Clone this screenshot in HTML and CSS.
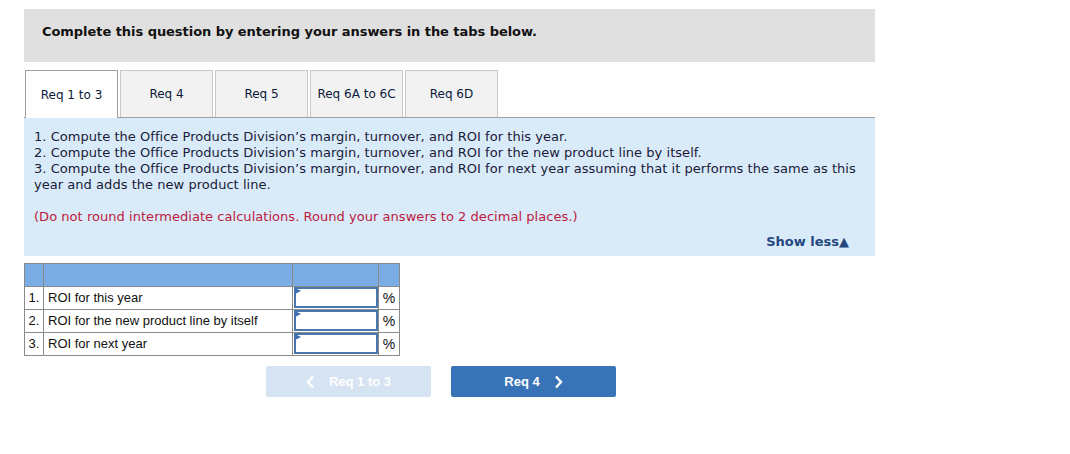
FILE: index.html
```html
<!DOCTYPE html>
<html>
<head>
<meta charset="utf-8">
<link rel="stylesheet" href="styles.css">
</head>
<body>
<div class="page">
  <div class="banner">Complete this question by entering your answers in the tabs below.</div>
  <div class="tabs">
    <div class="tab active">Req 1 to 3</div>
    <div class="tab">Req 4</div>
    <div class="tab">Req 5</div>
    <div class="tab">Req 6A to 6C</div>
    <div class="tab">Req 6D</div>
  </div>
  <div class="panel">
    <div class="lines">
      <div>1. Compute the Office Products Division’s margin, turnover, and ROI for this year.</div>
      <div>2. Compute the Office Products Division’s margin, turnover, and ROI for the new product line by itself.</div>
      <div>3. Compute the Office Products Division’s margin, turnover, and ROI for next year assuming that it performs the same as this year and adds the new product line.</div>
    </div>
    <div class="note">(Do not round intermediate calculations. Round your answers to 2 decimal places.)</div>
    <div class="showless">Show less<span class="tri">▲</span></div>
  </div>
  <table class="grid">
    <colgroup><col class="w-num"><col class="w-label"><col class="w-in"><col class="w-pct"></colgroup>
    <tr class="head"><td></td><td></td><td></td><td></td></tr>
    <tr><td class="c-num">1.</td><td class="c-label">ROI for this year</td><td class="c-in"><div class="inp"><span class="flag"></span></div></td><td class="c-pct">%</td></tr>
    <tr><td class="c-num">2.</td><td class="c-label">ROI for the new product line by itself</td><td class="c-in"><div class="inp"><span class="flag"></span></div></td><td class="c-pct">%</td></tr>
    <tr><td class="c-num">3.</td><td class="c-label">ROI for next year</td><td class="c-in"><div class="inp"><span class="flag"></span></div></td><td class="c-pct">%</td></tr>
  </table>
  <div class="nav">
    <div class="btn prev"><svg class="chev" width="9" height="14" viewBox="0 0 9 14"><path d="M7 1.5 L2 7 L7 12.5" fill="none" stroke="#fff" stroke-width="2.4"/></svg><span>Req 1 to 3</span></div>
    <div class="btn next"><span>Req 4</span><svg class="chev" width="9" height="14" viewBox="0 0 9 14"><path d="M2 1.5 L7 7 L2 12.5" fill="none" stroke="#fff" stroke-width="2.4"/></svg></div>
  </div>
</div>
</body>
</html>
```
FILE: styles.css
```css
html, body { margin: 0; padding: 0; background: #fff; }
.page {
  padding: 9px 0 0 24px;
  width: 851px;
  font-family: "DejaVu Sans", Verdana, sans-serif;
  color: #1a1a2e;
}
.banner {
  height: 53px;
  background: #e0e0e0;
  box-sizing: border-box;
  padding: 15px 0 0 18px;
  font-size: 13px;
  font-weight: bold;
  letter-spacing: -0.05px;
  color: #111;
}
.tabs {
  display: flex;
  margin-top: 8px;
  border-bottom: 1px solid #a0a0a0;
  height: 47px;
  padding-left: 1px;
}
.tab {
  width: 91px;
  height: 46px;
  margin-right: 2px;
  background: #f2f2f2;
  border: 1px solid #c8c8c8;
  border-bottom: none;
  display: flex;
  align-items: center;
  justify-content: center;
  font-size: 12px;
  color: #0a1a3a;
}
.tab.active {
  background: #fff;
  border-color: #a0a0a0;
  height: 47px;
  margin-bottom: -1px;
  position: relative;
  z-index: 1;
}
.panel {
  background: #d9ebf9;
  height: 138px;
  box-sizing: border-box;
  padding: 11px 6px 0 10px;
  font-size: 13px;
  line-height: 16px;
  letter-spacing: 0.04px;
  color: #1a1a3a;
}
.note {
  margin-top: 16px;
  color: #bd1a3d;
}
.showless {
  margin-top: 9px;
  text-align: right;
  padding-right: 20px;
  font-weight: bold;
  color: #24467f;
  letter-spacing: 0;
}
.tri { font-size: 13px; }
.grid {
  margin-top: 7px;
  border-collapse: collapse;
  table-layout: fixed;
  width: 375px;
  font-family: "Liberation Sans", Arial, sans-serif;
  font-size: 13px;
  color: #111;
}
.w-num { width: 19px; }
.w-label { width: 249px; }
.w-in { width: 86px; }
.w-pct { width: 21px; }
.grid td {
  border: 1px solid #8a8a8a;
  height: 22px;
  padding: 0 0 1px 0;
  box-sizing: border-box;
  vertical-align: middle;
}
.grid tr { height: 23px; }
.grid .head td { background: #7aade3; }
.c-num { text-align: center; }
.c-label { padding-left: 4px !important; white-space: nowrap; }
.c-pct { text-align: center; font-size: 14px; }
.inp {
  position: relative;
  height: 17px;
  margin: 0 0 0 1px;
  border: 2px solid #4a76ae;
  background: #fff;
}
.flag {
  position: absolute;
  left: -1px;
  top: -1px;
  width: 0; height: 0;
  border-top: 3px solid transparent;
  border-bottom: 3px solid transparent;
  border-left: 6px solid #3d6fb0;
}
.nav {
  display: flex;
  gap: 20px;
  margin-top: 10px;
  padding-left: 242px;
}
.btn {
  width: 165px;
  height: 31px;
  border-radius: 2px;
  display: flex;
  align-items: center;
  justify-content: center;
  gap: 14px;
  font-family: "Liberation Sans", Arial, sans-serif;
  font-weight: bold;
  font-size: 13px;
  color: #fff;
}
.btn.prev { background: #d6e3f2; }
.btn.next { background: #3873b8; }
```
